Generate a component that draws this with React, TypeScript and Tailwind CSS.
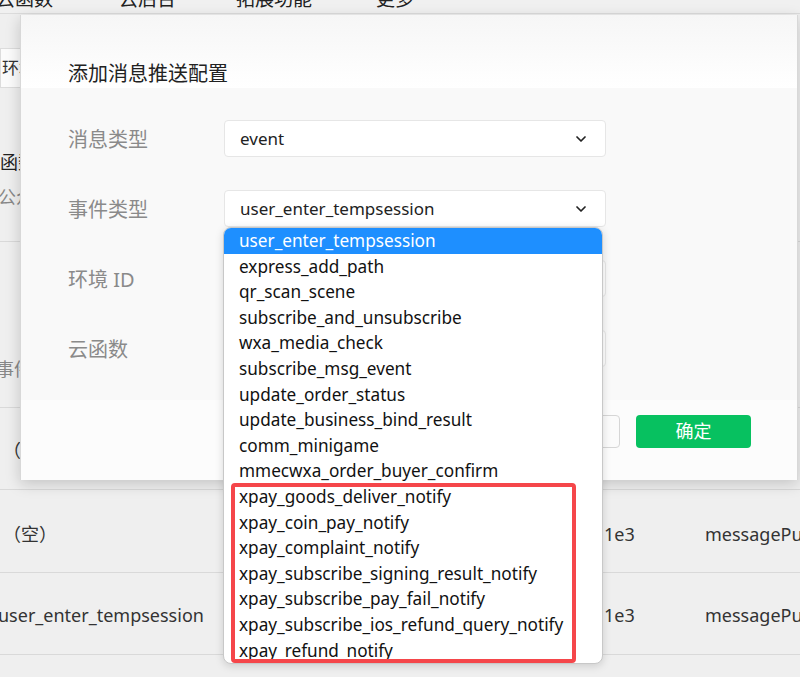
import React from "react";
import { ChevronDown } from "lucide-react";

const items = [
  "user_enter_tempsession",
  "express_add_path",
  "qr_scan_scene",
  "subscribe_and_unsubscribe",
  "wxa_media_check",
  "subscribe_msg_event",
  "update_order_status",
  "update_business_bind_result",
  "comm_minigame",
  "mmecwxa_order_buyer_confirm",
  "xpay_goods_deliver_notify",
  "xpay_coin_pay_notify",
  "xpay_complaint_notify",
  "xpay_subscribe_signing_result_notify",
  "xpay_subscribe_pay_fail_notify",
  "xpay_subscribe_ios_refund_query_notify",
  "xpay_refund_notify",
];

const font = { fontFamily: '"Noto Sans", "Noto Sans CJK SC", sans-serif' };

function Select({ value }: { value?: string }) {
  return (
    <div className="w-[382px] h-[37px] bg-white border border-[#e6e6e6] rounded-[4px] flex items-center justify-between pl-[15px] pr-[16px] text-[17px] text-[#222]">
      <span>{value ?? ""}</span>
      <ChevronDown size={16} strokeWidth={2.6} className="text-[#222]" />
    </div>
  );
}

function Row({ label, value }: { label: string; value?: string }) {
  return (
    <div className="flex items-center h-[37px]">
      <div className="w-[156px] text-[20px] text-[#8a8a8a] pt-[3px]">{label}</div>
      <Select value={value} />
    </div>
  );
}

export default function App() {
  return (
    <div className="relative w-[800px] h-[677px] overflow-hidden bg-[#efefef] flex flex-col" style={font}>
      {/* background page */}
      <div className="h-[14px] shrink-0 border-b border-[#dcdcdc] bg-[#f0f0f0] overflow-hidden">
        <div className="flex text-[19px] text-[#222] -mt-[13px] leading-[24px]">
          <span className="ml-[-4px] shrink-0">云函数</span>
          <span className="ml-[66px] shrink-0">云后台</span>
          <span className="ml-[60px] shrink-0">拓展功能</span>
          <span className="ml-[64px] shrink-0">更多</span>
        </div>
      </div>
      <div className="h-[228px] shrink-0 border-b border-[#d9d9d9] pt-[34px] flex flex-col">
        <div className="w-[60px] h-[40px] bg-[#fbfbfb] border border-[#dcdcdc] flex items-center pl-[1px] text-[17px] text-[#333]">
          环境ID
        </div>
        <div className="mt-[62px] text-[18px] text-[#222] leading-[24px]">函数</div>
        <div className="mt-[11px] text-[18px] text-[#888] leading-[24px] ml-[-2px]">公众号</div>
      </div>
      <div className="h-[166px] shrink-0 border-b border-[#d9d9d9] flex items-end pb-[24px]">
        <span className="text-[18px] text-[#888] ml-[-4px]">事件类型</span>
      </div>
      <div className="h-[82px] shrink-0 border-b border-[#d9d9d9] flex items-center pt-[4px]">
        <span className="text-[18px] text-[#333] ml-[3px]">（空）</span>
      </div>
      <div className="h-[83px] shrink-0 border-b border-[#d9d9d9] flex items-center pt-[6px] text-[18px] text-[#333]">
        <span className="w-[601px] shrink-0 ml-[3px]">（空）</span>
        <span className="w-[101px] shrink-0">1e3</span>
        <span className="shrink-0">messagePush</span>
      </div>
      <div className="h-[82px] shrink-0 border-b border-[#d9d9d9] flex items-center pt-[3px] text-[18px] text-[#333]">
        <span className="w-[606px] shrink-0 -ml-[2px]">user_enter_tempsession</span>
        <span className="w-[101px] shrink-0">1e3</span>
        <span className="shrink-0">messagePush</span>
      </div>

      {/* modal */}
      <div className="absolute left-[20px] top-[15px] w-[778px] h-[465px] flex flex-col shadow-[0_4px_14px_rgba(0,0,0,0.18)] border-l border-r border-[#d8d8d8]">
        <div className="h-[73px] flex items-end pl-[47px] bg-gradient-to-b from-[#f6f6f6] to-white">
          <span className="text-[20px] text-[#222] leading-[28px]">添加消息推送配置</span>
        </div>
        <div className="flex-1 bg-[#f9f9f9] pl-[47px] pt-[32px] flex flex-col gap-[33px]">
          <Row label="消息类型" value="event" />
          <Row label="事件类型" value="user_enter_tempsession" />
          <Row label="环境 ID" />
          <Row label="云函数" />
        </div>
        <div className="h-[80px] bg-[#fcfcfc] flex justify-end items-start pt-[15px] pr-[46px] gap-[16px]">
          <button className="w-[115px] h-[33px] rounded-[4px] border border-[#d6d6d6] bg-[#fbfbfb] text-[17px] text-[#222]">
            取消
          </button>
          <button className="w-[115px] h-[33px] rounded-[4px] bg-[#07c160] text-[18px] text-white">
            确定
          </button>
        </div>
      </div>

      {/* dropdown */}
      <div className="absolute left-[223px] top-[227px] w-[380px] bg-white rounded-[8px] overflow-hidden border border-[#c8c8c8] shadow-[0_2px_8px_rgba(0,0,0,0.15)]">
        {items.map((it, i) => (
          <div
            key={it}
            className={
              i === 0
                ? "h-[25.6px] leading-[25.6px] pl-[15px] text-[17.2px] bg-[#1e8fff] text-white"
                : "h-[25.6px] leading-[25.6px] pl-[15px] text-[17.2px] text-[#111]"
            }
          >
            {it}
          </div>
        ))}
      </div>
      {/* highlight */}
      <div className="absolute left-[231px] top-[483px] w-[345px] h-[180px] border-[4px] border-[#f5464a] rounded-[4px]" />
    </div>
  );
}
